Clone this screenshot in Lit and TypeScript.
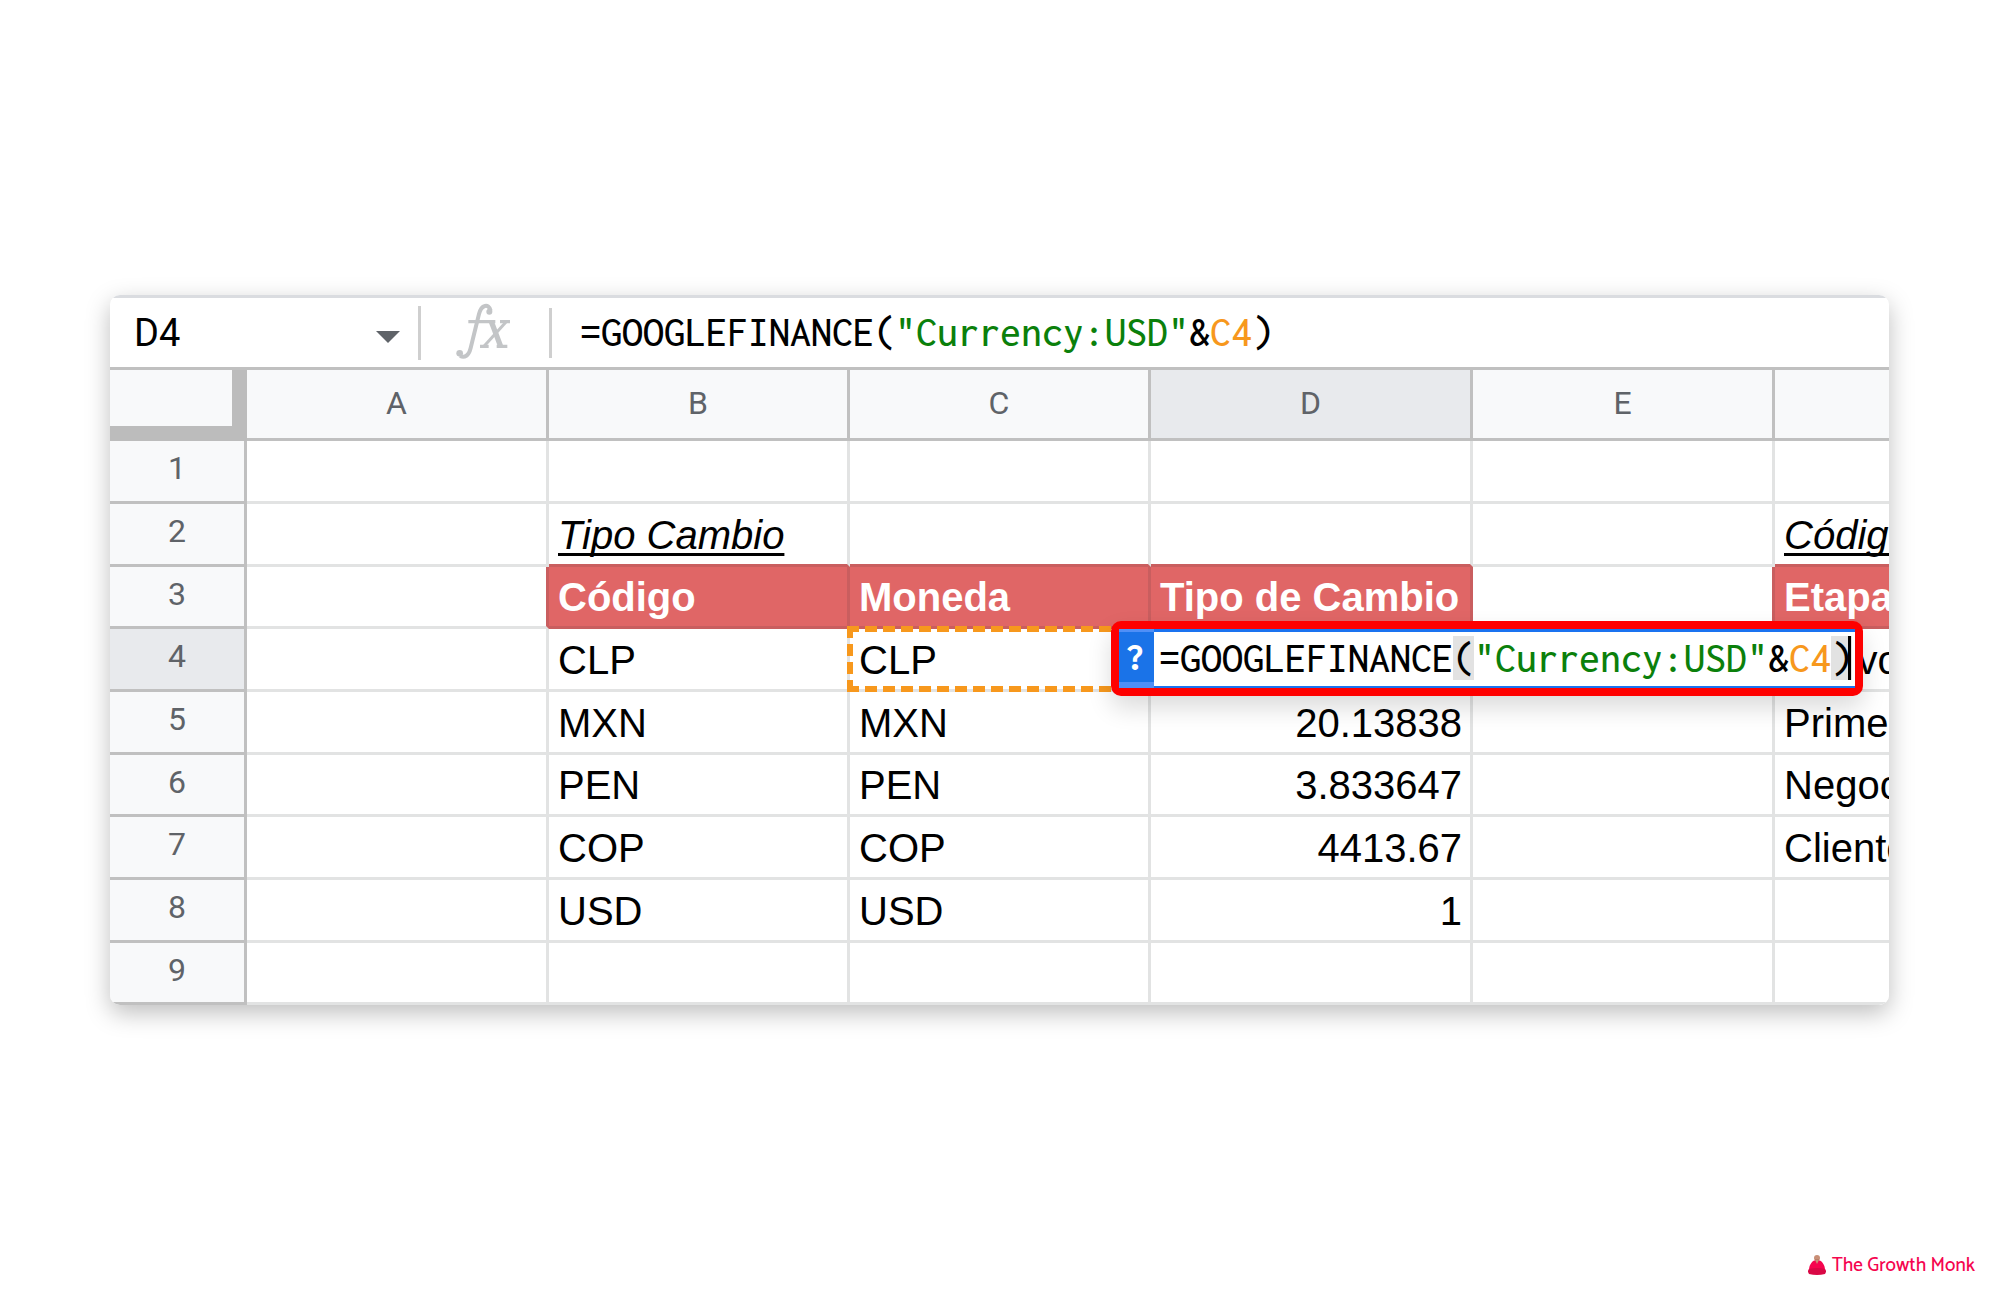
import { LitElement, html, css, svg, nothing } from "lit";
import { customElement } from "lit/decorators.js";
import { classMap } from "lit/directives/class-map.js";

const COLUMNS = ["A", "B", "C", "D", "E", "F"];

const ROWS: string[][] = [
  ["", "", "", "", "", ""],
  ["", "Tipo Cambio", "", "", "", "Código"],
  ["", "Código", "Moneda", "Tipo de Cambio", "", "Etapa"],
  ["", "CLP", "CLP", "", "", "Nuevo"],
  ["", "MXN", "MXN", "20.13838", "", "Primera"],
  ["", "PEN", "PEN", "3.833647", "", "Negociación"],
  ["", "COP", "COP", "4413.67", "", "Cliente"],
  ["", "USD", "USD", "1", "", ""],
  ["", "", "", "", "", ""],
];

const ACTIVE_ROW = 3;
const ACTIVE_COL = 3;
const REF_COL = 2;
const isFilled = (r: number, c: number) => r === 2 && !!ROWS[r][c];

@customElement("formula-text")
export class FormulaText extends LitElement {
  static properties = { brackets: { type: Boolean } };
  declare brackets: boolean;

  static styles = css`
    :host {
      display: block;
      font: 500 42px/44px Inconsolata, "Noto Sans Mono CJK SC", monospace;
      white-space: nowrap;
      color: #000;
    }
    .text {
      color: #0b800b;
    }
    .ref {
      color: #f7981d;
    }
    .mark {
      background: #e2e2e2;
    }
  `;

  render() {
    const mark = classMap({ mark: this.brackets });
    return html`=GOOGLEFINANCE<span class=${mark}>(</span><span class="text">"Currency:USD"</span>&amp;<span class="ref">C4</span><span class=${mark}>)</span>`;
  }
}

@customElement("formula-bar")
export class FormulaBar extends LitElement {
  static styles = css`
    :host {
      display: flex;
      align-items: center;
      height: 69px;
      border-top: 3px solid #dadce0;
      border-bottom: 3px solid #c0c0c0;
      background: #fff;
    }
    .name {
      display: flex;
      align-items: center;
      box-sizing: border-box;
      width: 311px;
      height: 54px;
      padding: 0 18px 0 24px;
      border-right: 3px solid #cfcfcf;
    }
    input {
      flex: 1;
      min-width: 0;
      padding: 0;
      border: 0;
      outline: 0;
      background: none;
      font: 400 38px/44px Roboto, sans-serif;
      color: #000;
    }
    button {
      display: flex;
      padding: 8px 0 0;
      border: 0;
      background: none;
    }
    .fx {
      box-sizing: border-box;
      display: flex;
      justify-content: center;
      width: 131px;
      height: 50px;
      padding-right: 6px;
      border-right: 3px solid #cfcfcf;
    }
    .fx svg {
      margin-top: -6px;
    }
    .formula {
      flex: 1;
      padding: 0 0 2px 28px;
    }
  `;

  render() {
    return html`
      <div class="name">
        <input aria-label="Cuadro de nombres" value="D4" />
        <button aria-label="Rangos con nombre">
          <svg width="24" height="12" viewBox="0 0 24 12"><path d="M0 0h24L12 12z" fill="#5f6368" /></svg>
        </button>
      </div>
      <div class="fx">
        <svg width="56" height="58" viewBox="0 0 168 174" fill="none" stroke="#c3c5c7">
          <path d="M110 26C104 3 82 8 75 36L50 138C44 162 32 168 18 162" stroke-width="12" />
          <path d="M43 59H124M138 59H168M78 133H104M128 133H160" stroke-width="10" />
          <path d="M112 59L140 133" stroke-width="16" />
          <path d="M156 60L90 133" stroke-width="9" />
          <circle cx="106" cy="29" r="9" fill="#c3c5c7" stroke="none" />
          <circle cx="17" cy="154" r="10" fill="#c3c5c7" stroke="none" />
        </svg>
      </div>
      <formula-text class="formula" role="textbox" aria-label="Fórmula"></formula-text>
    `;
  }
}

@customElement("cell-editor")
export class CellEditor extends LitElement {
  static styles = css`
    :host {
      display: flex;
      border: 8px solid #fe0000;
      border-radius: 10px;
      background: #fff;
      box-shadow: 0 12px 24px rgba(0, 0, 0, 0.14);
    }
    .help {
      width: 35px;
      padding: 0 4px 0 0;
      border: 0;
      border-top: 3px solid #4f8ff7;
      border-bottom: 6px solid #4f8ff7;
      background: #1a73e8;
      color: #fff;
      font: 800 38px/44px Inconsolata, monospace;
    }
    .field {
      display: flex;
      align-items: center;
      box-sizing: border-box;
      height: 59px;
      padding: 0 4px 2px 5px;
      border-top: 3px solid #1a73f0;
      border-bottom: 2px solid #1a73f0;
    }
    .caret {
      width: 3px;
      height: 44px;
      margin-left: -4px;
      background: #000;
    }
  `;

  render() {
    return html`
      <button class="help" aria-label="Ayuda de la fórmula">?</button>
      <div class="field" role="textbox" aria-label="D4">
        <formula-text brackets></formula-text>
        <span class="caret"></span>
      </div>
    `;
  }
}

@customElement("sheet-grid")
export class SheetGrid extends LitElement {
  static styles = css`
    table {
      width: 100%;
      table-layout: fixed;
      border-collapse: separate;
      border-spacing: 0;
    }
    .w-head {
      width: 137px;
    }
    .w-std {
      width: 301px;
    }
    .w-b {
      width: 302px;
    }
    .w-d {
      width: 322px;
    }
    th,
    td {
      box-sizing: border-box;
      height: 63px;
      padding: 0;
      border: 0 solid #e2e3e3;
      border-width: 0 3px 3px 0;
      white-space: nowrap;
    }
    tbody tr:nth-child(3n) > * {
      height: 62px;
    }
    th {
      border-color: #c0c0c0;
      background: #f8f9fa;
      color: #5f6368;
      font: 400 32px/36px Roboto, sans-serif;
      text-align: center;
    }
    thead th {
      height: 71px;
      padding-bottom: 2px;
    }
    tbody th {
      padding: 0 0 6px;
    }
    .corner {
      border-width: 0 15px 15px 0;
      border-color: #bcbcbc;
    }
    th.active {
      background: #e8eaed;
    }
    td {
      position: relative;
      padding: 1px 9px 0;
      background: #fff;
      color: #000;
      font: 400 40px/46px "Liberation Sans", Arial, sans-serif;
    }
    tr > :last-child {
      border-right-width: 0;
    }
    .number {
      text-align: right;
      padding-right: 8px;
    }
    .title {
      font-style: italic;
      text-decoration: underline;
      text-decoration-thickness: 3px;
      text-underline-offset: 4px;
      text-decoration-skip-ink: none;
    }
    .fill {
      background: #e06666;
      border-color: #c95e5f;
      color: #fff;
      font-weight: 700;
    }
    .edge-right {
      border-right-color: #c95e5f;
    }
    .edge-bottom {
      border-bottom-color: #c95e5f;
    }
    .range {
      --dash: #f7981d 0 12px, transparent 12px 18px;
      position: absolute;
      inset: -3px;
      background:
        repeating-linear-gradient(90deg, var(--dash)) top / 100% 6px no-repeat,
        repeating-linear-gradient(90deg, var(--dash)) bottom / 100% 6px no-repeat,
        repeating-linear-gradient(180deg, var(--dash)) left / 6px 100% no-repeat;
    }
    cell-editor {
      position: absolute;
      left: -40px;
      top: -8px;
      z-index: 1;
    }
  `;

  private cell(text: string, r: number, c: number) {
    const classes = classMap({
      number: c === 3 && r > ACTIVE_ROW,
      title: r === 1,
      fill: isFilled(r, c),
      "edge-right": r === 2 && isFilled(r, c + 1),
      "edge-bottom": r === 1 && isFilled(2, c),
    });
    const overlay =
      r === ACTIVE_ROW && c === REF_COL
        ? html`<div class="range"></div>`
        : r === ACTIVE_ROW && c === ACTIVE_COL
          ? html`<cell-editor></cell-editor>`
          : nothing;
    return html`<td class=${classes}>${text}${overlay}</td>`;
  }

  render() {
    return html`
      <table>
        <colgroup>
          <col class="w-head" />
          <col class="w-b" />
          <col class="w-std" />
          <col class="w-std" />
          <col class="w-d" />
          <col class="w-b" />
          <col />
        </colgroup>
        <thead>
          <tr>
            <th class="corner"></th>
            ${COLUMNS.map(
              (name, c) =>
                html`<th scope="col" class=${classMap({ active: c === ACTIVE_COL })}>${name === "F" ? nothing : name}</th>`
            )}
          </tr>
        </thead>
        <tbody>
          ${ROWS.map(
            (row, r) => html`<tr>
              <th scope="row" class=${classMap({ active: r === ACTIVE_ROW })}>${r + 1}</th>
              ${row.map((text, c) => this.cell(text, r, c))}
            </tr>`
          )}
        </tbody>
      </table>
    `;
  }
}

@customElement("app-root")
export class AppRoot extends LitElement {
  static styles = css`
    :host {
      display: grid;
      grid-template-rows: 1fr auto 1fr;
      box-sizing: border-box;
      min-height: 100vh;
      background: #fff;
    }
    main,
    .shadow {
      grid-area: 2 / 1;
      margin: 0 111px 0 110px;
      border-radius: 10px;
    }
    main {
      overflow: hidden;
    }
    .shadow {
      box-shadow: 0 8px 24px rgba(0, 0, 0, 0.26);
    }
    footer {
      grid-row: 3;
      display: flex;
      align-self: end;
      align-items: center;
      justify-content: flex-end;
      gap: 6px;
      padding: 0 25px 19px 0;
      color: #f5054f;
      font: 500 19px/30px Catamaran, Lato, sans-serif;
    }
    footer span {
      padding-top: 2px;
    }
  `;

  private logo() {
    return svg`
      <circle cx="9" cy="3" r="3" fill="#c98f76" />
      <path d="M7 4h4v4H7z" fill="#b97f68" />
      <path d="M9 5C14 5 17 10 17 15H1C1 10 4 5 9 5z" fill="#f5054f" />
      <path d="M1 14Q9 12 17 14Q19 16 17 19Q9 21 1 19Q-1 16 1 14z" fill="#d90845" />
      <path d="M7 5L9 9L11 5z" fill="#c98f76" />`;
  }

  render() {
    return html`
      <div class="shadow"></div>
      <main>
        <formula-bar></formula-bar>
        <sheet-grid></sheet-grid>
      </main>
      <footer>
        <svg width="18" height="21" viewBox="0 0 18 21" aria-hidden="true">${this.logo()}</svg>
        <span>The Growth Monk</span>
      </footer>
    `;
  }
}
